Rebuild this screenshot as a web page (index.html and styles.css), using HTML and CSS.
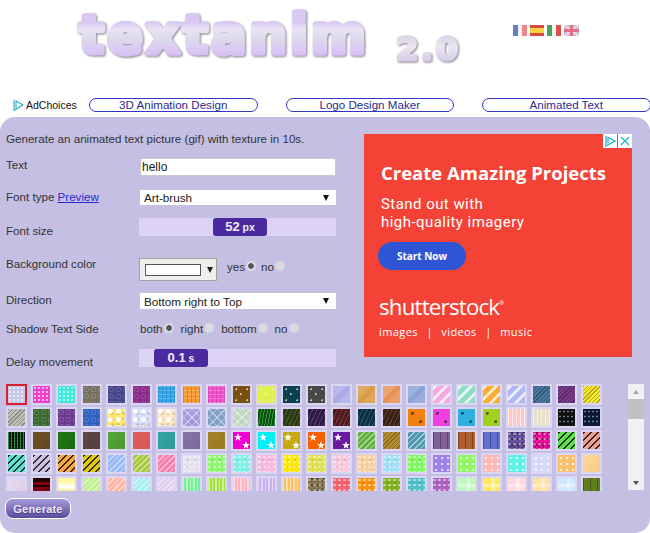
FILE: index.html
```html
<!DOCTYPE html>
<html lang="en">
<head>
<meta charset="utf-8">
<title>textanim 2.0</title>
<link rel="stylesheet" href="styles.css">
</head>
<body>
<header class="top">
  <svg class="logo" width="452" height="80" viewBox="0 0 452 80">
    <defs>
      <linearGradient id="band" gradientUnits="userSpaceOnUse" x1="0" y1="5" x2="0" y2="60">
        <stop offset="0" stop-color="#d9c9f2"/>
        <stop offset=".3" stop-color="#d8c8f3"/>
        <stop offset=".42" stop-color="#e9e4f4"/>
        <stop offset=".62" stop-color="#dcd8ea"/>
        <stop offset=".78" stop-color="#dcc9f5"/>
        <stop offset="1" stop-color="#cdb9ee"/>
      </linearGradient>
      <linearGradient id="grey" gradientUnits="userSpaceOnUse" x1="0" y1="30" x2="0" y2="62">
        <stop offset="0" stop-color="#d2cbdc"/>
        <stop offset=".5" stop-color="#ebe6f2"/>
        <stop offset="1" stop-color="#d3c6e4"/>
      </linearGradient>
    </defs>
    <text class="logo-main" x="18" y="52" textLength="290" lengthAdjust="spacingAndGlyphs">textanim</text>
    <text class="logo-ver" x="335" y="59" textLength="62" lengthAdjust="spacing">2.0</text>
  </svg>
  <div class="flags">
    <svg class="flag" width="14" height="11" viewBox="0 0 14 11"><rect width="5" height="11" fill="#4f72c4"/><rect x="5" width="4" height="11" fill="#f4f2f6"/><rect x="9" width="5" height="11" fill="#e87a80"/></svg>
    <svg class="flag" width="14" height="11" viewBox="0 0 14 11"><rect width="14" height="11" fill="#d8322a"/><rect y="3" width="14" height="5" fill="#f6d02c"/></svg>
    <svg class="flag" width="14" height="11" viewBox="0 0 14 11"><rect width="5" height="11" fill="#2f9a4a"/><rect x="5" width="4" height="11" fill="#f6f4f4"/><rect x="9" width="5" height="11" fill="#dc3a3a"/></svg>
    <svg class="flag" width="15" height="11" viewBox="0 0 15 11"><rect width="15" height="11" fill="#b9b4dc"/><path d="M0 0L15 11M15 0L0 11" stroke="#f2d6de" stroke-width="2"/><path d="M7.500 0V11M0 5.500H15" stroke="#e0607a" stroke-width="3"/></svg>
  </div>
</header>

<nav class="nav">
  <a class="adchoices" href="#">
    <svg class="adchoices-icon" width="11" height="12" viewBox="0 0 11 12"><path d="M1 .7V11.300L10 6L3 2V9" fill="none" stroke="#1fa8c9" stroke-width="1.100" stroke-linejoin="round"/></svg>
    <span>AdChoices</span>
  </a>
  <a class="pill" href="#">3D Animation Design</a>
  <a class="pill pill-gap" href="#">Logo Design Maker</a>
  <a class="pill pill-gap" href="#">Animated Text</a>
</nav>

<main class="panel">
  <div class="upper">
    <form class="form">
      <p class="intro">Generate an animated text picture (gif) with texture in 10s.</p>
      <div class="row row-text">
        <label class="label">Text</label>
        <input class="field" type="text" value="hello">
      </div>
      <div class="row row-font">
        <label class="label">Font type <a class="link" href="#">Preview</a></label>
        <div class="select-wrap"><select class="select"><option>Art-brush</option></select></div>
      </div>
      <div class="row row-size">
        <label class="label label-low">Font size</label>
        <div class="slider"><span class="thumb thumb-size"><b class="num">52</b> px</span></div>
      </div>
      <div class="row row-bg">
        <label class="label">Background color</label>
        <div class="controls">
          <div class="picker"><span class="swatch"></span><span class="picker-arrow"></span></div>
          <span class="opts opts-bg">
            <span class="opt">yes<input class="radio" type="radio" name="bg" checked></span>
            <span class="opt">no<input class="radio" type="radio" name="bg"></span>
          </span>
        </div>
      </div>
      <div class="row row-dir">
        <label class="label">Direction</label>
        <div class="select-wrap select-tall"><select class="select"><option>Bottom right to Top</option></select></div>
      </div>
      <div class="row row-shadow">
        <label class="label">Shadow Text Side</label>
        <span class="opts opts-shadow">
          <span class="opt">both<input class="radio" type="radio" name="sh" checked></span>
          <span class="opt">right<input class="radio" type="radio" name="sh"></span>
          <span class="opt">bottom<input class="radio" type="radio" name="sh"></span>
          <span class="opt">no<input class="radio" type="radio" name="sh"></span>
        </span>
      </div>
      <div class="row row-delay">
        <label class="label label-low">Delay movement</label>
        <div class="slider"><span class="thumb thumb-delay"><b class="num">0.1</b> s</span></div>
      </div>
    </form>

    <aside class="ad">
      <div class="ad-marks">
        <span class="ad-mark"><svg width="12" height="12" viewBox="0 0 12 12"><path d="M2 1V11L11 6L4 2.500V8.500" fill="none" stroke="#25b3d1" stroke-width="1.300"/></svg></span>
        <span class="ad-mark"><svg width="12" height="12" viewBox="0 0 12 12"><path d="M2 2L10 10M10 2L2 10" stroke="#25b3d1" stroke-width="1.300"/></svg></span>
      </div>
      <h2 class="ad-title">Create Amazing Projects</h2>
      <p class="ad-sub">Stand out with<br>high-quality imagery</p>
      <a class="ad-btn" href="#">Start Now</a>
      <div class="ad-brand">shutterstock<sup class="ad-reg">®</sup></div>
      <div class="ad-links"><span>images</span><span>|</span><span>videos</span><span>|</span><span>music</span></div>
    </aside>
  </div>

  <div class="picker-area">
    <div class="tiles" id="tiles"></div>
    <div class="scrollbar">
      <span class="sb-up"></span>
      <span class="sb-track"><span class="sb-thumb"></span></span>
      <span class="sb-down"></span>
    </div>
  </div>

  <button class="generate" type="button">Generate</button>
</main>
<script src="tiles.js"></script>
</body>
</html>
```

FILE: styles.css
```css
* { box-sizing: border-box; }
html, body { margin: 0; padding: 0; }
body {
  width: 650px;
  height: 533px;
  overflow: hidden;
  background: #fff;
  font-family: "Liberation Sans", Arial, sans-serif;
  font-size: 11.600px;
  color: #333;
}

/* header */
.top { display: flex; height: 98px; padding-left: 61px; }
.logo { display: block; flex: none; margin-top: 1px; filter: drop-shadow(1.500px 1.500px .8px #85808f); }
.logo-main {
  font-family: "DejaVu Sans", sans-serif;
  font-size: 53px;
  font-weight: bold;
  letter-spacing: 3px;
  fill: url(#band);
  stroke: url(#band);
  stroke-width: 5px;
  stroke-linejoin: round;
  stroke-linecap: round;
}
.logo-ver {
  font-family: "DejaVu Sans", sans-serif;
  font-size: 32px;
  font-weight: bold;
  fill: url(#grey);
  stroke: url(#grey);
  stroke-width: 3px;
  stroke-linejoin: round;
  stroke-linecap: round;
}
.flags { display: flex; gap: 3px; margin-top: 25px; height: 11px; }
.flag { display: block; opacity: .9; }

/* nav */
.nav { display: flex; align-items: center; height: 14px; padding-left: 13px; white-space: nowrap; }
.adchoices {
  display: flex;
  flex: none;
  align-items: center;
  gap: 2px;
  width: 76px;
  font-size: 10.500px;
  color: #111;
  text-decoration: none;
}
.adchoices-icon { display: block; }
.pill {
  display: block;
  flex: none;
  width: 168.500px;
  height: 14px;
  border: 1px solid #3333c4;
  border-radius: 8px;
  background: #fff;
  color: #2b2b8c;
  font-size: 11.600px;
  line-height: 12px;
  text-align: center;
  text-decoration: none;
}
.pill-gap { margin-left: 28px; }

/* panel */
.panel {
  height: 416px;
  margin-top: 5px;
  padding: 15px 0 0 6px;
  border-radius: 15px;
  background: #c4bfe3;
}
.upper { display: flex; align-items: flex-start; }
.form { width: 358px; flex: none; }
.intro { margin: 0 0 12px; line-height: 14px; }

.row { display: flex; align-items: flex-start; }
.row-text { height: 32px; }
.row-font { height: 28px; }
.row-size { height: 39px; }
.row-bg { height: 36px; }
.row-dir { height: 29px; }
.row-shadow { height: 27px; }
.row-delay { height: 18px; }

.label { display: block; width: 134px; flex: none; line-height: 14px; }
.label-low { padding-top: 6px; }
.link { color: #2a2ad0; }

.field {
  display: block;
  width: 196px;
  height: 18px;
  margin: 0;
  padding: 0 1px;
  border: 1px solid #c9c6d2;
  border-radius: 0;
  background: #fff;
  color: #222;
  font: 12px "Liberation Sans", Arial, sans-serif;
}
.select-wrap { position: relative; width: 196px; height: 15px; }
.select-tall { height: 16px; }
.select-wrap::after {
  content: "";
  position: absolute;
  top: 5px;
  right: 7px;
  border-top: 6px solid #111;
  border-left: 3px solid transparent;
  border-right: 3px solid transparent;
}
.select {
  display: block;
  width: 100%;
  height: 100%;
  margin: 0;
  padding: 0 0 0 4px;
  border: 0;
  border-radius: 0;
  background: #fff;
  color: #222;
  font: 11.700px "Liberation Sans", Arial, sans-serif;
  appearance: none;
  box-shadow: 0 0 0 .5px #c9c6d2;
}

.slider {
  display: flex;
  width: 197px;
  height: 18px;
  margin-left: -1px;
  background: #ddd3f7;
}
.thumb {
  display: block;
  width: 54px;
  height: 18px;
  border-radius: 3px;
  background: #4b2a9f;
  color: #f1edfb;
  font-size: 10.500px;
  font-weight: bold;
  line-height: 18px;
  text-align: center;
}
.num { font-size: 13px; }
.thumb-size { margin-left: 74px; }
.thumb-delay { margin-left: 15px; }

.controls { display: flex; align-items: flex-start; margin-top: 1px; }
.picker {
  display: flex;
  align-items: center;
  width: 78px;
  height: 23px;
  margin-left: -1px;
  padding-left: 5px;
  border: 1px solid #a8a1a1;
  background: #f1efee;
}
.swatch { display: block; width: 56px; height: 12px; border: 1px solid #555; background: #fff; }
.picker-arrow {
  display: block;
  margin-left: 6px;
  border-top: 6px solid #222;
  border-left: 3.500px solid transparent;
  border-right: 3.500px solid transparent;
}
.opts { display: flex; align-items: center; }
.opts-bg { gap: 5px; margin: 2px 0 0 10px; height: 14px; }
.opts-shadow { gap: 7px; height: 14px; }
.opt { display: flex; align-items: center; line-height: 14px; }
.radio {
  display: block;
  width: 10px;
  height: 10px;
  margin: -3px 0 0 1px;
  border-radius: 50%;
  background: #dcdbe4;
  box-shadow: inset 0 0 0 1px #d2d0dc;
  appearance: none;
}
.radio:checked { background: radial-gradient(circle, #55555f 0, #55555f 2.500px, #e4e3ea 3.200px); }

/* ad */
.ad {
  display: flex;
  flex-direction: column;
  position: relative;
  width: 268px;
  height: 223px;
  margin-top: 2px;
  padding: 28px 0 0 17px;
  background: #f44336;
  color: #fff;
}
.ad-marks { position: absolute; top: 0; right: 0; display: flex; gap: 1px; }
.ad-mark {
  display: flex;
  align-items: center;
  justify-content: center;
  width: 14px;
  height: 14px;
  background: #fff;
}
.ad-title {
  margin: 0;
  font-family: "Open Sans", sans-serif;
  font-size: 18.500px;
  font-weight: 700;
  line-height: 22px;
  white-space: nowrap;
}
.ad-sub {
  margin: 11px 0 0;
  font-family: Roboto, sans-serif;
  font-size: 15px;
  line-height: 18px;
  letter-spacing: .45px;
  white-space: nowrap;
}
.ad-btn {
  display: block;
  width: 88px;
  height: 28px;
  margin: 11px 0 0 -3px;
  border-radius: 14px;
  background: #2f55d4;
  color: #fff;
  font-family: "Open Sans", sans-serif;
  font-size: 10px;
  font-weight: 700;
  line-height: 28px;
  text-align: center;
  text-decoration: none;
}
.ad-brand {
  margin: 22px 0 0 -2px;
  font-family: "Open Sans", sans-serif;
  font-size: 22.300px;
  line-height: 30px;
  letter-spacing: -.8px;
  white-space: nowrap;
}
.ad-reg { font-size: 6px; line-height: 0; vertical-align: 10px; }
.ad-links {
  display: flex;
  gap: 8.500px;
  margin: 2px 0 0 -2px;
  font-family: "Open Sans", sans-serif;
  font-size: 11px;
  line-height: 16px;
  letter-spacing: .4px;
}

/* texture picker */
.picker-area { display: flex; align-items: flex-start; margin-top: 17px; }
.tiles {
  display: grid;
  grid-template-columns: repeat(24, 21px);
  grid-auto-rows: 21px;
  column-gap: 4px;
  row-gap: 2px;
  width: 622px;
  height: 107px;
  overflow: hidden;
  flex: none;
  filter: blur(.35px);
}
.tile {
  position: relative;
  border: 2px solid #dcd6f5;
  background-color: var(--c);
  overflow: hidden;
}
.tile.selected { border-color: #d8202a; }

.t-plain { background-image: linear-gradient(135deg, rgba(255,255,255,.04), rgba(0,0,0,.05)); }
.t-dots { background-image: radial-gradient(circle, rgba(255,255,255,.6) 1px, transparent 1.500px); background-size: 4px 4px; }
.t-pale { background-image: radial-gradient(circle, rgba(255,255,255,.75) 1px, transparent 1.600px); background-size: 6px 6px; }
.t-floral {
  background-image:
    radial-gradient(circle, transparent 1.500px, rgba(255,255,255,.2) 2px, transparent 3px);
  background-size: 7px 7px;
}
.t-blot {
  background-image:
    radial-gradient(circle at 30% 30%, rgba(255,255,255,.9) 0 2px, transparent 3px),
    radial-gradient(circle at 70% 70%, rgba(120,100,40,.25) 0 1.500px, transparent 2.500px);
  background-size: 8px 8px, 6px 6px;
}
.t-grid {
  background-image:
    repeating-linear-gradient(90deg, rgba(0,0,0,.14) 0 1px, transparent 1px 4px),
    repeating-linear-gradient(0deg, rgba(255,255,255,.22) 0 1px, transparent 1px 4px);
}
.t-spot { background-image: radial-gradient(circle at 30% 30%, rgba(255,255,255,.7) 0 .8px, transparent 1.200px), radial-gradient(circle at 70% 75%, rgba(255,255,255,.7) 0 .8px, transparent 1.200px); background-size: 11px 11px; }
.t-bspot { background-image: radial-gradient(circle at 25% 25%, rgba(0,0,0,.5) 0 1.300px, transparent 1.800px), radial-gradient(circle at 75% 75%, rgba(0,0,0,.5) 0 1.300px, transparent 1.800px); background-size: 17px 17px; }
.t-sheen { background-image: linear-gradient(135deg, rgba(255,255,255,.18) 0 40%, rgba(255,255,255,.02) 40% 60%, rgba(255,255,255,.15) 60%); }
.t-band { background-image: repeating-linear-gradient(135deg, rgba(255,255,255,.75) 0 3px, transparent 3px 8px); }
.t-diag { background-image: repeating-linear-gradient(135deg, rgba(0,0,0,.28) 0 1px, transparent 1px 3px); }
.t-ldiag { background-image: repeating-linear-gradient(135deg, rgba(255,255,255,.5) 0 1px, transparent 1px 4px); }
.t-bdiag { background-image: repeating-linear-gradient(135deg, rgba(0,0,0,.8) 0 1.500px, transparent 1.500px 5px); }
.t-lattice {
  background-image:
    repeating-linear-gradient(45deg, rgba(255,255,255,.45) 0 1px, transparent 1px 6px),
    repeating-linear-gradient(135deg, rgba(255,255,255,.45) 0 1px, transparent 1px 6px);
}
.t-vs { background-image: repeating-linear-gradient(90deg, rgba(255,255,255,.6) 0 1px, transparent 1px 4px); }
.t-dvs { background-image: repeating-linear-gradient(90deg, rgba(0,0,0,.3) 0 1px, transparent 1px 7px); }
.t-wide { background-image: repeating-linear-gradient(90deg, rgba(255,255,255,.5) 0 1.500px, transparent 1.500px 3.500px); }
.t-noise {
  background-image:
    radial-gradient(circle at 30% 40%, rgba(255,255,255,.45) 0 1px, transparent 1.400px),
    radial-gradient(circle at 70% 20%, rgba(0,0,0,.5) 0 1px, transparent 1.400px),
    radial-gradient(circle at 60% 80%, rgba(0,0,0,.35) 0 .8px, transparent 1.200px);
  background-size: 5px 5px, 6px 6px, 4px 4px;
}
.t-speck {
  background-image:
    radial-gradient(circle at 30% 40%, rgba(255,255,255,.55) 0 1px, transparent 1.500px),
    radial-gradient(circle at 70% 70%, rgba(0,0,0,.1) 0 1px, transparent 1.500px);
  background-size: 5px 5px, 7px 7px;
}
.t-matrix { background-image: repeating-linear-gradient(90deg, rgba(60,220,90,.6) 0 1px, transparent 1px 3px), repeating-linear-gradient(0deg, rgba(0,0,0,.7) 0 1px, transparent 1px 3px); }
.t-dark { background-image: repeating-linear-gradient(115deg, rgba(255,255,255,.16) 0 1px, transparent 1px 4px); }
.t-gstr { background-image: repeating-linear-gradient(100deg, rgba(80,220,80,.5) 0 1px, transparent 1px 3px); }
.t-tex { background-image: radial-gradient(circle, rgba(170,200,255,.6) 0 .8px, transparent 1.200px); background-size: 4px 5px; }
.t-horiz { background-image: linear-gradient(180deg, #200 0 25%, transparent 25% 40%, #200 40% 55%, transparent 55%); }
.t-fade { background-image: linear-gradient(180deg, #fff8a0 0 20%, #fff 50%, #f0f0a0 75%, #a8b060); }
.t-plaid { background-image: linear-gradient(90deg, transparent 0 50%, rgba(255,255,255,.4) 50% 70%, transparent 70%), linear-gradient(180deg, transparent 0 35%, rgba(255,255,255,.4) 35% 55%, transparent 55%); }
.t-star::before, .t-star::after {
  content: "";
  position: absolute;
  width: 8px;
  height: 8px;
  background: #fff;
  clip-path: polygon(50% 0, 62% 36%, 100% 38%, 70% 60%, 80% 100%, 50% 76%, 20% 100%, 30% 60%, 0 38%, 38% 36%);
}
.t-star::before { top: 1px; left: 1px; }
.t-star::after { bottom: 0; right: 0; }

/* scrollbar */
.scrollbar {
  display: flex;
  flex-direction: column;
  width: 16px;
  height: 106px;
  flex: none;
  background: #f1f1f1;
}
.sb-up, .sb-down { display: block; height: 15px; flex: none; position: relative; }
.sb-up::after, .sb-down::after {
  content: "";
  position: absolute;
  left: 5px;
  border-left: 3px solid transparent;
  border-right: 3px solid transparent;
}
.sb-up::after { top: 6px; border-bottom: 4px solid #a3a3a3; }
.sb-down::after { top: 6px; border-top: 4px solid #505050; }
.sb-track { display: block; flex: 1; }
.sb-thumb { display: block; width: 100%; height: 20px; background: #c1c1c1; }

/* button */
.generate {
  display: block;
  width: 66px;
  height: 21px;
  margin: 7px 0 0 -1px;
  padding: 0;
  border: 1.500px solid #fff;
  border-radius: 8px;
  background: linear-gradient(180deg, #a99bd8 0, #8272bc 50%, #5b4c9c 100%);
  color: #ece8f6;
  font: bold 11px "Liberation Sans", Arial, sans-serif;
  letter-spacing: .2px;
  text-align: center;
  text-shadow: 0 1px 1px rgba(40,30,90,.6);
}
```

FILE: tiles.js
```js
var rows = [
  "dots #c8c8ee,dots #f040d0,dots #40e8d8,floral #777060,floral #45458a,floral #8a2a8a,grid #30a8f0,grid #f89830,grid #f850d0,spot #7a5010,spot #e0f050,spot #0a4050,spot #484848,sheen #a8a8e8,sheen #d89840,sheen #e89050,sheen #88a0d8,band #f8a8e0,band #90dcc8,band #f8ac30,band #b0b8f8,diag #4878a0,diag #7a3a8a,diag #f8e830",
  "diag #c0c0b8,floral #3a6a30,floral #6a3a90,floral #3060c0,blot #ffe870,blot #d4e0ff,blot #ffe8c8,lattice #a898e0,lattice #80a0c8,lattice #c0d8c0,gstr #0a5010,dark #2a3a10,dark #301848,dark #501818,dark #0a3048,dark #3a2010,bspot #f08010,bspot #f040e0,bspot #30b0e0,bspot #a0d020,vs #ffc8c8,vs #e8e0c8,tex #101010,tex #0a1830",
  "matrix #052010,plain #6a4a20,plain #1a7010,plain #5a4040,plain #50a030,plain #e05858,plain #30a0a0,plain #8070a0,plain #a08020,star #f000d0,star #00f0f8,star #c8a810,star #f86000,star #6a1aa0,ldiag #60b040,diag #b89030,ldiag #5098b0,dvs #806098,dvs #b06030,dvs #6070d0,noise #6a50a0,noise #f010a0,bdiag #60e050,bdiag #f0a090",
  "bdiag #60e0d0,bdiag #d0c0e0,bdiag #f8a840,bdiag #e0c810,ldiag #98b8f8,ldiag #a8c840,ldiag #f880b0,speck #e8e0f0,speck #90f870,speck #80f0e8,speck #f8b8e0,speck #ffe800,speck #e0e050,speck #f8c8d8,speck #f8d0a0,speck #a0e0f8,speck #80f860,pale #a080e8,pale #90f860,pale #ffb8b8,pale #60f0e8,pale #d8d8ff,pale #f8c070,plain #ffd890",
  "plain #e8d8f0,horiz #800010,fade #fffff0,ldiag #c0f090,ldiag #ffb8a8,ldiag #a8f0f0,ldiag #e0d0f0,wide #70f090,wide #a0e040,wide #ffb0c0,wide #c8b0f0,wide #f8c060,noise #8a7850,speck #f86070,speck #f89010,speck #80b020,speck #50c0c8,speck #b060c0,plaid #c0f8c0,plaid #ffe860,plaid #ffd8e0,plaid #ffe0a0,plaid #d0e8ff,dvs #608020"
];
var host = document.getElementById("tiles");
rows.forEach(function (row, r) {
  row.split(",").forEach(function (item, c) {
    var parts = item.split(" ");
    var tile = document.createElement("div");
    tile.className = "tile t-" + parts[0] + (r === 0 && c === 0 ? " selected" : "");
    tile.style.setProperty("--c", parts[1]);
    host.appendChild(tile);
  });
});
```
